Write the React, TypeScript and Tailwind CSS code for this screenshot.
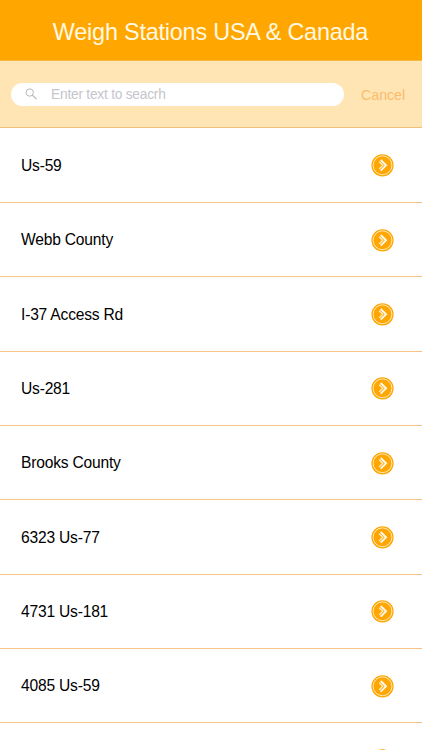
const stations = [
  "Us-59",
  "Webb County",
  "I-37 Access Rd",
  "Us-281",
  "Brooks County",
  "6323 Us-77",
  "4731 Us-181",
  "4085 Us-59",
];

// ─── Icons ────────────────────────────────────────────────────────────────────

function SearchIcon() {
  return (
    <svg viewBox="0 0 12 12" className="h-3 w-3 shrink-0" fill="none" stroke="#b0b0b4">
      <circle cx="4.7" cy="4.5" r="3.7" strokeWidth="0.9" />
      <path d="M7.4 7.2 11.5 11.2" strokeWidth="1.1" />
    </svg>
  );
}

function GoIcon() {
  return (
    <svg viewBox="-0.5 -0.3 24 24" className="h-6 w-6 shrink-0" fill="none">
      <circle cx="12" cy="12" r="11.1" fill="#ffa602" />
      <circle cx="12" cy="12" r="9.4" stroke="#fff0cc" strokeWidth="0.9" />
      <path d="M8.7 8.4 12.3 12 8.7 15.6" stroke="#fff0cc" strokeWidth="1.3" />
      <path d="M10.2 6.7 15.5 12l-5.3 5.3" stroke="#fffaf0" strokeWidth="1.9" />
    </svg>
  );
}

// ─── Station row ──────────────────────────────────────────────────────────────

function StationRow({ name }: { name?: string }) {
  return (
    <li className="flex h-[74.33px] shrink-0 items-center justify-between border-b border-[#f7c285] pr-[28px] pl-[21px]">
      <span className="pt-[1.6px] text-[15.6px] leading-5 tracking-[-0.2px] text-black">{name}</span>
      <GoIcon />
    </li>
  );
}

export default function App() {
  return (
    <main className="flex h-[750px] w-[422px] flex-col overflow-hidden bg-white font-['Liberation_Sans',Arial,sans-serif]">
      <header className="flex h-[61px] shrink-0 items-center justify-center border-b border-[#f6b840] bg-[#ffa700] pt-[3px] pr-px">
        <h1 className="text-[23.4px] leading-7 tracking-[-0.2px] whitespace-nowrap text-[#fff8e2]">
          Weigh Stations USA &amp; Canada
        </h1>
      </header>

      <div className="flex h-[67px] shrink-0 items-center border-b border-[#f3bf7c] bg-[#ffe4b4] pl-[11px]">
        <div className="flex h-[23px] w-[333px] items-center rounded-full bg-white pl-[14px]">
          <SearchIcon />
          <input
            type="text"
            placeholder="Enter text to seacrh"
            className="ml-[14px] flex-1 bg-transparent pt-[2px] text-[13.8px] leading-5 tracking-[-0.25px] outline-none placeholder:text-[#c5c5cc]"
          />
        </div>
        <button type="button" className="ml-[17px] pt-px text-[14.2px] leading-5 text-[#fabd6b]">
          Cancel
        </button>
      </div>

      <ul className="flex flex-col pt-[0.7px]">
        {stations.map((name) => (
          <StationRow key={name} name={name} />
        ))}
        {/* next row peeks in at the bottom of the screen */}
        <StationRow />
      </ul>
    </main>
  );
}
